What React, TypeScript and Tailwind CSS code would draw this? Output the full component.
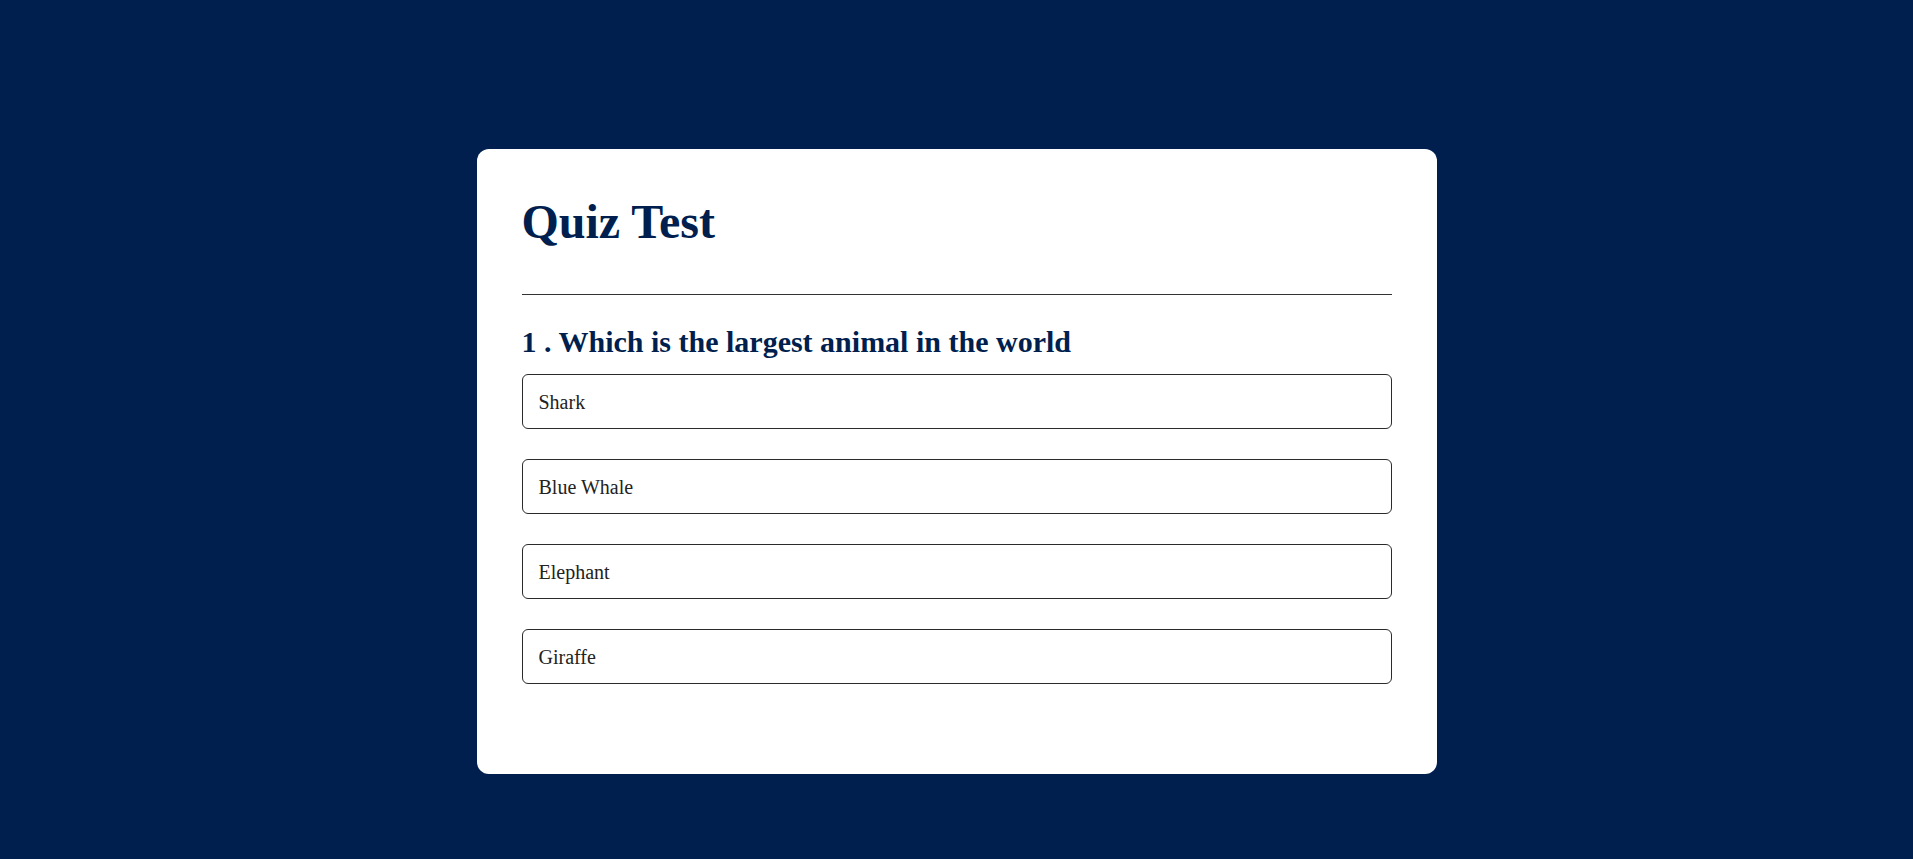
const options = ["Shark", "Blue Whale", "Elephant", "Giraffe"];

function QuizCard() {
  return (
    <div className="w-[960px] rounded-[12px] bg-white px-[45px] pt-[46px] pb-[90px]">
      <h1 className="text-[48px] leading-[54px] font-bold text-[#001f4f]">
        Quiz Test
      </h1>
      <hr className="mt-[45px] border-t border-[#333333]" />
      <h2 className="mt-[30px] text-[30px] leading-[34px] font-bold text-[#001f4f]">
        1 . Which is the largest animal in the world
      </h2>
      <ul className="mt-[15px] flex flex-col gap-[30px]">
        {options.map((opt) => (
          <li
            key={opt}
            className="flex h-[55px] items-center rounded-[6px] border border-[#2b2b2b] pl-[16px] text-[20px] text-[#222222]"
          >
            {opt}
          </li>
        ))}
      </ul>
    </div>
  );
}

export default function App() {
  return (
    <div
      className="flex min-h-screen items-start justify-center bg-[#001f4f] pt-[149px]"
      style={{ fontFamily: '"Liberation Serif", "Times New Roman", serif' }}
    >
      <QuizCard />
    </div>
  );
}
